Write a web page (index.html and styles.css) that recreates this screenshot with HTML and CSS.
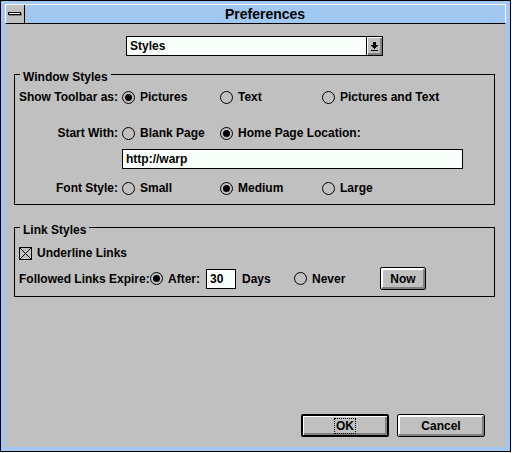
FILE: index.html
```html
<!DOCTYPE html>
<html lang="en">
<head>
<meta charset="utf-8">
<title>Preferences</title>
<link rel="stylesheet" href="styles.css">
</head>
<body>
<form class="window">
  <header class="titlebar">
    <button type="button" class="system-menu" aria-label="System menu">
      <svg width="14" height="4" viewBox="0 0 14 4" shape-rendering="crispEdges">
        <path d="M1 1h13v3h-13z" fill="#808080"/>
        <path d="M0 0h13v3h-13z" fill="#000"/>
        <path d="M1 1h11v1h-11z" fill="#fff"/>
      </svg>
    </button>
    <h1 class="title">Preferences</h1>
  </header>
  <main class="content">
    <div class="category">
      <select class="category-select" aria-label="Category">
        <option>Styles</option>
      </select>
      <span class="category-arrow">
        <svg width="7" height="9" viewBox="0 0 7 9" shape-rendering="crispEdges">
          <path d="M2 0h3v3h2v1h-1v1h-1v1h-1v1h-1v-1h-1v-1h-1v-1h-1v-1h2z M0 8h7v1h-7z"/>
        </svg>
      </span>
    </div>

    <fieldset class="group">
      <legend>Window Styles</legend>
      <div class="window-styles">
        <div class="row">
          <span class="row-label">Show Toolbar as:</span>
          <label class="option"><input type="radio" name="toolbar" checked>Pictures</label>
          <label class="option"><input type="radio" name="toolbar">Text</label>
          <label class="option"><input type="radio" name="toolbar">Pictures and Text</label>
        </div>
        <div class="row start">
          <span class="row-label">Start With:</span>
          <label class="option"><input type="radio" name="start">Blank Page</label>
          <label class="option wide"><input type="radio" name="start" checked>Home Page Location:</label>
          <input class="field location" type="text" value="http://warp" aria-label="Home page location">
        </div>
        <div class="row">
          <span class="row-label">Font Style:</span>
          <label class="option"><input type="radio" name="font">Small</label>
          <label class="option"><input type="radio" name="font" checked>Medium</label>
          <label class="option"><input type="radio" name="font">Large</label>
        </div>
      </div>
    </fieldset>

    <fieldset class="group">
      <legend>Link Styles</legend>
      <div class="link-styles">
        <label class="option"><input type="checkbox" checked>Underline Links</label>
        <div class="expiry">
          <span class="expiry-label">Followed Links Expire:</span>
          <label class="option after"><input type="radio" name="expire" checked>After:</label>
          <input class="field days" id="days" type="text" value="30">
          <label class="days-label" for="days">Days</label>
          <label class="option never"><input type="radio" name="expire">Never</label>
          <button type="button" class="button now">Now</button>
        </div>
      </div>
    </fieldset>

    <footer class="actions">
      <button type="submit" class="button default"><span class="focus">OK</span></button>
      <button type="button" class="button">Cancel</button>
    </footer>
  </main>
</form>
</body>
</html>
```

FILE: styles.css
```css
* {
  box-sizing: border-box;
}

body {
  margin: 0;
  padding: 0 1px 1px 0;
  min-height: 100vh;
  display: flex;
  background: #f8fffa;
  color: #000;
  font: bold 12px/14px "Liberation Sans", Arial, sans-serif;
}

input,
select,
button {
  margin: 0;
  font: inherit;
  color: inherit;
  border-radius: 0;
  outline: none;
}

.window {
  flex: 1;
  display: flex;
  flex-direction: column;
  border: 1px solid #000;
  padding: 3px 4px 4px;
  background: #a0c8f0;
}

.titlebar {
  display: flex;
  height: 20px;
  border: 1px solid #fff;
  border-bottom-color: #000;
}

.system-menu {
  display: flex;
  align-items: center;
  justify-content: center;
  width: 19px;
  padding: 0 0 1px;
  border: 0;
  border-right: 1px solid #000;
  background: #c0c0c0;
}

.title {
  flex: 1;
  margin: 0;
  padding-right: 18px;
  padding-left: 18px;
  font-size: 14px;
  line-height: 19px;
  text-align: center;
}

.content {
  flex: 1;
  display: flex;
  flex-direction: column;
  padding: 12px 11px 10px 9px;
  background: #c0c0c0;
}

.category {
  position: relative;
  align-self: center;
  width: 257px;
  margin-bottom: 8px;
}

.category-select {
  display: block;
  appearance: none;
  width: 100%;
  height: 20px;
  padding: 0 20px 0 3px;
  border: 1px solid #000;
  background: #f8fffa;
}

.category-arrow {
  position: absolute;
  top: 0;
  right: 0;
  bottom: 0;
  width: 17px;
  display: flex;
  align-items: center;
  justify-content: center;
  border: 1px solid #000;
  background: #c0c0c0;
  box-shadow: inset 1px 1px #fff, inset -2px -2px #808080;
  pointer-events: none;
}

.group {
  min-width: 0;
  margin: 0 0 12px;
  padding: 3px 4px 6px 0;
  border: 1px solid #000;
}

.group legend {
  margin-left: 5px;
  padding: 6px 3px 0;
}

.window-styles {
  display: flex;
  flex-direction: column;
  gap: 9px;
}

.row {
  display: grid;
  grid-template-columns: 103px 94fr 98fr 168fr;
  grid-auto-rows: 20px;
  gap: 6px 4px;
  align-items: center;
}

.start {
  margin-top: 7px;
}

.row-label {
  text-align: right;
}

.option {
  display: flex;
  align-items: center;
  gap: 5px;
  white-space: nowrap;
}

.wide {
  grid-column: span 2;
}

.option input {
  appearance: none;
  flex: none;
  width: 13px;
  height: 13px;
  border: 1px solid #000;
}

.option input[type="radio"] {
  display: flex;
  align-items: center;
  justify-content: center;
  border-radius: 50%;
}

.option input[type="radio"]:checked::before {
  content: "";
  width: 7px;
  height: 7px;
  border-radius: 50%;
  background: #000;
}

.option input[type="checkbox"]:checked {
  background: url("data:image/svg+xml,%3Csvg xmlns='http://www.w3.org/2000/svg' viewBox='0 0 11 11' shape-rendering='crispEdges'%3E%3Cpath d='M0 0L11 11M11 0L0 11' stroke='%23000'/%3E%3C/svg%3E") center / 11px 11px no-repeat;
}

.field {
  min-width: 0;
  height: 20px;
  padding: 0 3px;
  border: 1px solid #000;
  background: #f8fffa;
}

.location {
  grid-column: 2 / -1;
  margin-right: 27px;
}

.link-styles {
  display: flex;
  flex-direction: column;
  gap: 4px;
  padding: 3px 0 0 4px;
}

.link-styles .option {
  min-height: 20px;
}

.expiry {
  display: flex;
  align-items: center;
}

.expiry-label {
  flex: none;
  width: 131px;
  white-space: nowrap;
}

.after {
  width: 56px;
}

.days {
  width: 30px;
}

.days-label {
  width: 58px;
  padding-left: 6px;
}

.never {
  width: 86px;
}

.button {
  display: flex;
  align-items: center;
  justify-content: center;
  width: 88px;
  height: 23px;
  padding: 0;
  border: 1px solid #000;
  border-radius: 2px;
  background: #c0c0c0;
  box-shadow: inset 1px 1px #fff, inset -2px -2px #808080, inset 2px 2px #fff;
}

.now {
  width: 46px;
}

.default {
  border-width: 2px;
  box-shadow: inset 1px 1px #fff, inset -2px -2px #808080;
}

.focus {
  padding: 0 1px;
  border: 1px dotted #000;
}

.actions {
  display: flex;
  justify-content: flex-end;
  gap: 8px;
  margin-top: auto;
  padding-right: 10px;
}
```
